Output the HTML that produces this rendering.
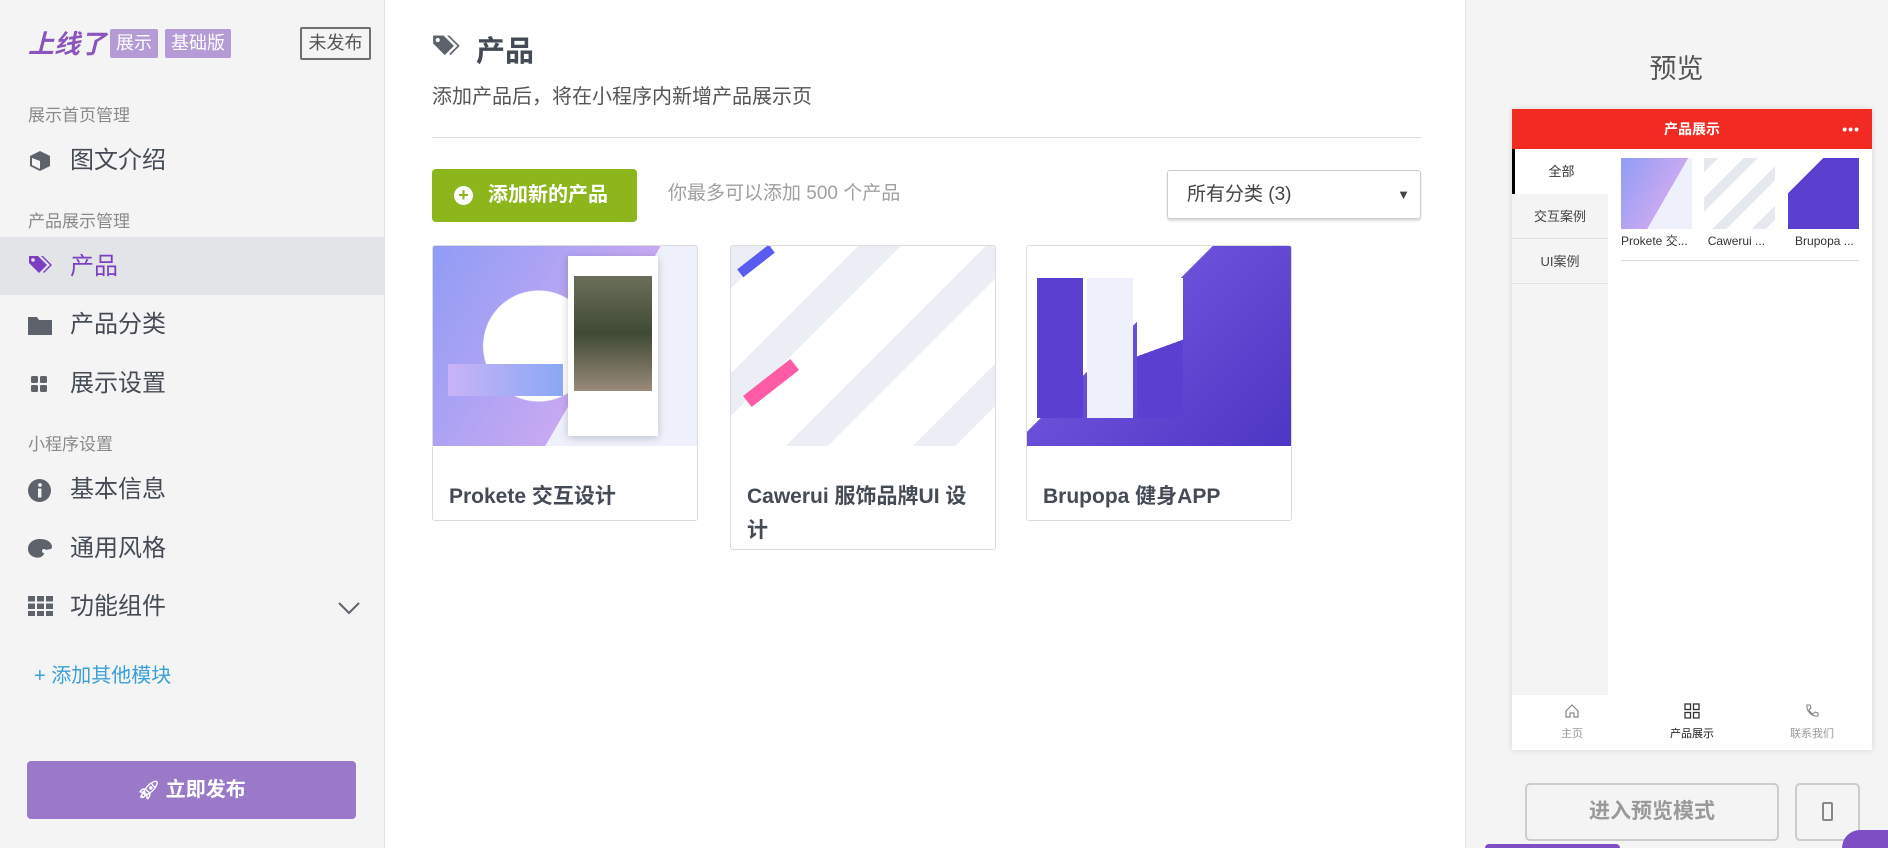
<!DOCTYPE html>
<html><head><meta charset="utf-8"><style>
*{margin:0;padding:0;box-sizing:border-box}
html,body{width:1888px;height:848px;overflow:hidden}
body{background:#fff;font-family:"Liberation Sans","Noto Sans CJK SC",sans-serif}
#w{position:relative;width:1888px;height:848px;overflow:hidden}
.a{position:absolute}
.sb{left:0;top:0;width:385px;height:848px;background:#f4f4f4;border-right:1px solid #e6e6e6}
.hd{left:28px;font-size:17px;color:#8a8a8a;line-height:20px}
.it{left:70px;font-size:24px;color:#444b55;line-height:28px}
.ic{left:28px}
.rp{left:1465px;top:0;width:423px;height:848px;background:#f4f4f4;border-left:1px solid #e6e6e6}
.card{background:#fff;border:1px solid #dcdcdc;border-radius:3px;overflow:hidden}
.card .img{height:200px}
.card .t{padding:0 16px;font-size:21px;font-weight:bold;color:#444b55;line-height:34px;margin-top:34px}
</style></head><body><div id="w">
<div class="a sb"></div>
<div class="a" style="left:28px;top:28px;font-size:26px;font-weight:bold;font-style:italic;color:#8a56bd;line-height:32px">上线了</div>
<div class="a" style="left:110px;top:29px;width:48px;height:29px;background:#b49bd6;color:#fff;font-size:18px;line-height:29px;text-align:center;border-radius:2px">展示</div>
<div class="a" style="left:165px;top:29px;width:66px;height:29px;background:#b49bd6;color:#fff;font-size:18px;line-height:29px;text-align:center;border-radius:2px">基础版</div>
<div class="a" style="left:300px;top:27px;width:71px;height:33px;border:2px solid #6d6f73;border-radius:2px;color:#555;font-size:18px;line-height:29px;text-align:center">未发布</div>

<div class="a hd" style="top:106px">展示首页管理</div>
<svg class="a ic" style="top:149px" width="24" height="24" viewBox="0 0 24 24"><path d="M12 2 L22 7 V17 L12 22 L2 17 V7Z" fill="#5e636b"/><path d="M12 12 L12 20 L4 16 V9Z" fill="#f4f4f4"/></svg>
<div class="a it" style="top:147px">图文介绍</div>
<div class="a hd" style="top:212px">产品展示管理</div>
<div class="a" style="left:0;top:237px;width:384px;height:58px;background:#e3e4e7"></div>
<svg class="a ic" style="top:255px" width="26" height="22" viewBox="0 0 26 22"><path d="M1 1 H10 L19 10 L11 18 L1 8Z" fill="#7b3fbf"/><circle cx="5" cy="5" r="1.8" fill="#e3e4e7"/><path d="M13 1 H15 L24 10 L16 18 L15 17 L22 10Z" fill="#7b3fbf"/></svg>
<div class="a it" style="top:253px;color:#7b3fbf">产品</div>
<svg class="a ic" style="top:315px" width="24" height="20" viewBox="0 0 24 20"><path d="M0 2 H9 L11 5 H24 V20 H0Z" fill="#5e636b"/></svg>
<div class="a it" style="top:311px">产品分类</div>
<svg class="a" style="left:31px;top:376px" width="16" height="16"><rect width="7" height="7" rx="1.5" fill="#5e636b"/><rect x="9" width="7" height="7" rx="1.5" fill="#5e636b"/><rect y="9" width="7" height="7" rx="1.5" fill="#5e636b"/><rect x="9" y="9" width="7" height="7" rx="1.5" fill="#5e636b"/></svg>
<div class="a it" style="top:370px">展示设置</div>
<div class="a hd" style="top:435px">小程序设置</div>
<svg class="a ic" style="top:479px" width="23" height="23" viewBox="0 0 23 23"><circle cx="11.5" cy="11.5" r="11.5" fill="#5e636b"/><rect x="10" y="9.5" width="3.4" height="9" fill="#f4f4f4"/><circle cx="12" cy="6" r="1.9" fill="#f4f4f4"/></svg>
<div class="a it" style="top:476px">基本信息</div>
<svg class="a ic" style="top:539px" width="24" height="20" viewBox="0 0 24 20"><path d="M12 0 C20 0 24 4 24 8 C24 11 20 10 18 11 C16 12 17 16 13 18 C8 20 0 17 0 10 C0 4 5 0 12 0Z" fill="#5e636b"/><circle cx="16" cy="12" r="2" fill="#f4f4f4"/></svg>
<div class="a it" style="top:535px">通用风格</div>
<svg class="a" style="left:28px;top:596px" width="25" height="20"><g fill="#5e636b"><rect width="7" height="5.5"/><rect x="9" width="7" height="5.5"/><rect x="18" width="7" height="5.5"/><rect y="7.5" width="7" height="5.5"/><rect x="9" y="7.5" width="7" height="5.5"/><rect x="18" y="7.5" width="7" height="5.5"/><rect y="15" width="7" height="5"/><rect x="9" y="15" width="7" height="5"/><rect x="18" y="15" width="7" height="5"/></g></svg>
<div class="a it" style="top:593px">功能组件</div>
<svg class="a" style="left:338px;top:601px" width="22" height="14"><path d="M1 2 L11 12 L21 2" stroke="#5e636b" stroke-width="2" fill="none"/></svg>
<div class="a" style="left:34px;top:664px;font-size:20px;color:#3ba1d8;line-height:24px">+ 添加其他模块</div>
<div class="a" style="left:27px;top:761px;width:329px;height:58px;background:#9a79c8;border-radius:4px;color:#fff;font-size:20px;font-weight:bold;line-height:58px;text-align:center"><span style="font-size:18px">&#x1F680;&#xFE0E;</span> 立即发布</div>

<svg class="a" style="left:432px;top:34px" width="30" height="26" viewBox="0 0 26 22"><path d="M1 1 H10 L19 10 L11 18 L1 8Z" fill="#5e636b"/><circle cx="5" cy="5" r="1.8" fill="#fff"/><path d="M13 1 H15 L24 10 L16 18 L15 17 L22 10Z" fill="#5e636b"/></svg>
<div class="a" style="left:476px;top:35px;font-size:29px;font-weight:bold;color:#444b55;line-height:34px">产品</div>
<div class="a" style="left:432px;top:85px;font-size:20px;color:#555;line-height:24px">添加产品后，将在小程序内新增产品展示页</div>
<div class="a" style="left:432px;top:137px;width:989px;height:1px;background:#dedede"></div>
<div class="a" style="left:432px;top:169px;width:205px;height:53px;background:#8db51c;border-radius:4px;color:#fff;font-size:20px;font-weight:bold;line-height:53px"><span style="position:absolute;left:22px;top:17px;width:19px;height:19px;border-radius:50%;background:#fff;color:#8db51c;font-size:18px;line-height:19px;text-align:center">+</span><span style="position:absolute;left:56px">添加新的产品</span></div>
<div class="a" style="left:668px;top:182px;font-size:19px;color:#a0a0a0;line-height:24px">你最多可以添加 500 个产品</div>
<div class="a" style="left:1167px;top:170px;width:254px;height:49px;border:1px solid #ccc;border-radius:3px;box-shadow:0 2px 2px rgba(0,0,0,.15);font-size:19px;color:#444;line-height:47px;padding-left:19px">所有分类 (3)<span style="position:absolute;right:10px;font-size:13px">▼</span></div>

<div class="a card" style="left:432px;top:245px;width:266px;height:276px"><div class="img" style="background:radial-gradient(circle at 40% 50%,#fff 0 55px,transparent 56px),linear-gradient(120deg,#8f9cf5,#c7a9f2 60%,#eef0fb 60%);position:relative"><div style="position:absolute;left:135px;top:10px;width:90px;height:180px;background:#fff;box-shadow:0 2px 8px rgba(0,0,0,.2)"><div style="margin:20px 6px;height:115px;background:linear-gradient(#6b6f5a,#3f4a35 50%,#9a8a7a)"></div></div><div style="position:absolute;left:15px;top:118px;width:115px;height:32px;background:linear-gradient(90deg,#c9b3f7,#8aa8f5)"></div></div><div class="t">Prokete 交互设计</div></div>
<div class="a card" style="left:730px;top:245px;width:266px;height:305px"><div class="img" style="background:repeating-linear-gradient(135deg,#eceef5 0 30px,#fff 30px 90px);position:relative"><div style="position:absolute;left:10px;top:130px;width:60px;height:14px;background:#ff5aa5;transform:rotate(-38deg)"></div><div style="position:absolute;left:5px;top:10px;width:40px;height:10px;background:#5a5cf0;transform:rotate(-38deg)"></div></div><div class="t">Cawerui 服饰品牌UI 设计</div></div>
<div class="a card" style="left:1026px;top:245px;width:266px;height:276px"><div class="img" style="background:linear-gradient(135deg,#fff 0 40%,#6a4fd8 40%,#4d36c4);position:relative"><div style="position:absolute;left:10px;top:32px;width:46px;height:140px;background:#5a3fd0"></div><div style="position:absolute;left:60px;top:32px;width:46px;height:140px;background:#eef0fb"></div><div style="position:absolute;left:110px;top:32px;width:46px;height:140px;background:linear-gradient(160deg,#fff 50%,#5a3fd0 50%)"></div></div><div class="t">Brupopa 健身APP</div></div>

<div class="a rp"></div>
<div class="a" style="left:1465px;top:53px;width:423px;text-align:center;font-size:27px;color:#555;line-height:32px">预览</div>
<div class="a" style="left:1512px;top:109px;width:360px;height:641px;background:#fff;box-shadow:0 0 6px rgba(0,0,0,.12)">
 <div style="position:absolute;left:0;top:0;width:360px;height:40px;background:#f22b22;color:#fff;font-weight:bold;font-size:14px;line-height:40px;text-align:center">产品展示<span style="position:absolute;right:12px;font-size:14px;letter-spacing:1px">•••</span></div>
 <div style="position:absolute;left:0;top:40px;width:96px;height:546px;background:#f4f4f4"></div>
 <div style="position:absolute;left:0;top:40px;width:96px;height:45px;background:#fff;border-left:3px solid #000;font-size:13px;line-height:45px;text-align:center;color:#333">全部</div>
 <div style="position:absolute;left:0;top:85px;width:96px;height:45px;border-bottom:1px solid #e2e2e2;font-size:13px;line-height:45px;text-align:center;color:#444">交互案例</div>
 <div style="position:absolute;left:0;top:130px;width:96px;height:45px;border-bottom:1px solid #e2e2e2;font-size:13px;line-height:45px;text-align:center;color:#444">UI案例</div>
 <div style="position:absolute;left:109px;top:49px;width:71px;height:71px;background:linear-gradient(120deg,#8f9cf5,#c7a9f2 60%,#eef0fb 60%)"></div>
 <div style="position:absolute;left:192px;top:49px;width:71px;height:71px;background:repeating-linear-gradient(135deg,#e6e8f0 0 10px,#fff 10px 28px)"></div>
 <div style="position:absolute;left:276px;top:49px;width:71px;height:71px;background:linear-gradient(135deg,#fff 0 25%,#5a3fd0 25%)"></div>
 <div style="position:absolute;left:109px;top:124px;font-size:12px;color:#333;line-height:16px;white-space:pre">Prokete 交...      Cawerui ...         Brupopa ...</div>
 <div style="position:absolute;left:109px;top:151px;width:238px;height:1px;background:#ddd"></div>
 <div style="position:absolute;left:0;top:586px;width:360px;height:55px;background:#fff;font-size:11px;color:#999">
  <svg style="position:absolute;left:52px;top:8px" width="16" height="16"><path d="M2 8 L8 2 L14 8 V14 H10 V10 H6 V14 H2Z" fill="none" stroke="#888" stroke-width="1.2"/></svg>
  <div style="position:absolute;left:0;width:120px;top:30px;text-align:center">主页</div>
  <svg style="position:absolute;left:172px;top:8px" width="16" height="16" fill="none" stroke="#333" stroke-width="1.3"><rect x="1" y="1" width="5.5" height="5.5"/><rect x="9.5" y="1" width="5.5" height="5.5"/><rect x="1" y="9.5" width="5.5" height="5.5"/><rect x="9.5" y="9.5" width="5.5" height="5.5"/></svg>
  <div style="position:absolute;left:120px;width:120px;top:30px;text-align:center;color:#222">产品展示</div>
  <svg style="position:absolute;left:292px;top:8px" width="16" height="16"><path d="M3 2 L6 2 L7 5 L5 7 C6 9 7 10 9 11 L11 9 L14 10 L14 13 C8 14 2 8 3 2Z" fill="none" stroke="#888" stroke-width="1.1"/></svg>
  <div style="position:absolute;left:240px;width:120px;top:30px;text-align:center">联系我们</div>
 </div>
</div>
<div class="a" style="left:1525px;top:783px;width:254px;height:58px;border:2px solid #ccc;border-radius:5px;color:#999;font-size:21px;font-weight:bold;line-height:54px;text-align:center">进入预览模式</div>
<div class="a" style="left:1795px;top:783px;width:65px;height:58px;border:2px solid #ccc;border-radius:5px"><div style="position:absolute;left:25px;top:17px;width:11px;height:19px;border:2px solid #888;border-radius:2px"></div></div>
<div class="a" style="left:1485px;top:844px;width:135px;height:4px;background:#7e4fc4;border-radius:4px 4px 0 0"></div>
<div class="a" style="left:1842px;top:830px;width:46px;height:18px;background:#7e4fc4;border-radius:35px 0 0 0"></div>
</div></body></html>
